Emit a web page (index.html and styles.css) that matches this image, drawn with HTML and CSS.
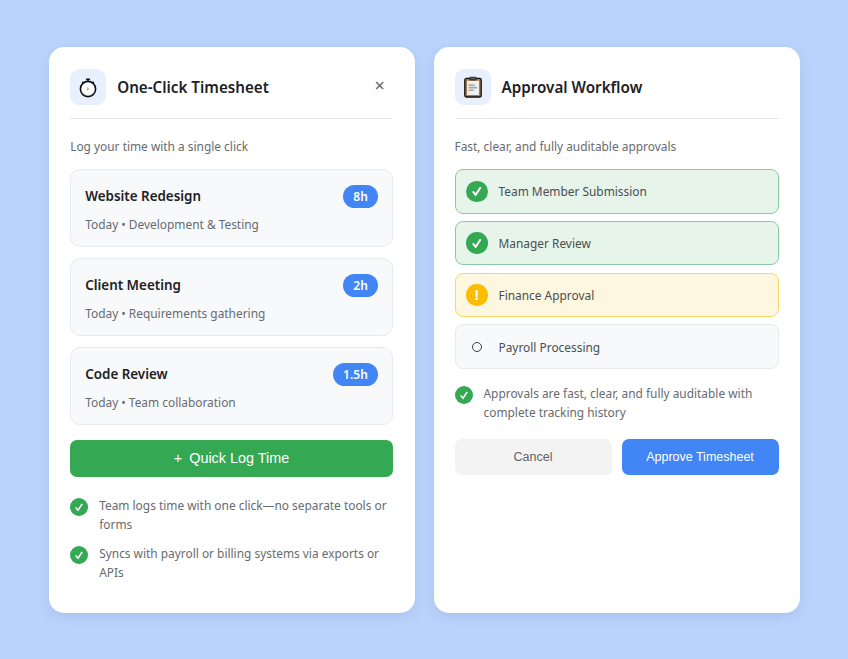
FILE: index.html
```html
<!DOCTYPE html>
<html lang="en">
<head>
  <meta charset="UTF-8">
  <title>Timesheet</title>
  <link rel="stylesheet" href="styles.css">
</head>
<body>
  <div class="card log-card">
    <div class="head">
      <div class="icon-box">
        <svg width="24" height="24" viewBox="0 0 24 24"><path d="M10.6 4.2h2.8M12 4.2v2.4M6.6 7.4l1 1M17.4 7.4l-1 1" fill="none" stroke="#111" stroke-width="1.5" stroke-linecap="round"/><circle cx="12" cy="14" r="7.6" fill="#fff" stroke="#111" stroke-width="1.6"/><path d="M10.8 12.4 12.6 14 11 15.2" fill="none" stroke="#e4606d" stroke-width="1"/></svg>
      </div>
      <h2>One-Click Timesheet</h2>
      <span class="close">×</span>
    </div>
    <p class="sub">Log your time with a single click</p>

    <div class="entry">
      <div class="entry-top"><h3>Website Redesign</h3><span class="hours">8h</span></div>
      <p>Today • Development &amp; Testing</p>
    </div>
    <div class="entry">
      <div class="entry-top"><h3>Client Meeting</h3><span class="hours">2h</span></div>
      <p>Today • Requirements gathering</p>
    </div>
    <div class="entry">
      <div class="entry-top"><h3>Code Review</h3><span class="hours">1.5h</span></div>
      <p>Today • Team collaboration</p>
    </div>

    <button class="quick"><span class="plus">+</span>Quick Log Time</button>

    <div class="note">
      <span class="tick small"><svg width="18" height="18" viewBox="0 0 18 18"><path d="M5.6 9.4 8 12.2 12.2 5.8" fill="none" stroke="#fff" stroke-width="1.5"/></svg></span>
      <p>Team logs time with one click—no separate tools or forms</p>
    </div>
    <div class="note">
      <span class="tick small"><svg width="18" height="18" viewBox="0 0 18 18"><path d="M5.6 9.4 8 12.2 12.2 5.8" fill="none" stroke="#fff" stroke-width="1.5"/></svg></span>
      <p>Syncs with payroll or billing systems via exports or APIs</p>
    </div>
  </div>

  <div class="card">
    <div class="head">
      <div class="icon-box">
        <svg width="24" height="24" viewBox="0 0 24 24"><rect x="3.8" y="3.4" width="16.4" height="18.6" rx="1.6" fill="#a9784c" stroke="#111" stroke-width="1.3"/><rect x="6" y="5.8" width="12" height="14.2" fill="#efefef"/><path d="M7.6 10h6M7.6 12.6h8.6M7.6 15.2h5" stroke="#a4a4a4" stroke-width="1.6"/><rect x="8.6" y="2.2" width="6.8" height="2.8" rx="1" fill="#555" stroke="#111" stroke-width=".7"/></svg>
      </div>
      <h2>Approval Workflow</h2>
    </div>
    <p class="sub">Fast, clear, and fully auditable approvals</p>

    <div class="step done">
      <span class="tick"><svg width="22" height="22" viewBox="0 0 22 22"><path d="M7 11.4 9.9 15 15 7.2" fill="none" stroke="#fff" stroke-width="2"/></svg></span>
      Team Member Submission
    </div>
    <div class="step done">
      <span class="tick"><svg width="22" height="22" viewBox="0 0 22 22"><path d="M7 11.4 9.9 15 15 7.2" fill="none" stroke="#fff" stroke-width="2"/></svg></span>
      Manager Review
    </div>
    <div class="step warn">
      <span class="tick amber">!</span>
      Finance Approval
    </div>
    <div class="step todo">
      <span class="tick empty"><i></i></span>
      Payroll Processing
    </div>

    <div class="note approvals">
      <span class="tick small"><svg width="18" height="18" viewBox="0 0 18 18"><path d="M5.6 9.4 8 12.2 12.2 5.8" fill="none" stroke="#fff" stroke-width="1.5"/></svg></span>
      <p>Approvals are fast, clear, and fully auditable with complete tracking history</p>
    </div>

    <div class="actions">
      <button class="cancel">Cancel</button>
      <button class="approve">Approve Timesheet</button>
    </div>
  </div>
</body>
</html>
```

FILE: styles.css
```css
* {
  box-sizing: border-box;
}
body {
  margin: 0;
  height: 659px;
  overflow: hidden;
  background: #b9d3fd;
  font-family: "Noto Sans", sans-serif;
  display: flex;
  justify-content: center;
  gap: 19px;
  padding-top: 47px;
}
.card {
  width: 366px;
  height: 566px;
  background: #fff;
  border-radius: 15px;
  padding: 22px 21px;
  box-shadow: 0 4px 14px rgba(0,0,0,0.08);
}
.log-card {
  padding: 22px 21.7px;
}
.head {
  display: flex;
  align-items: center;
  height: 50px;
  padding-bottom: 14px;
  border-bottom: 1px solid #e8eaed;
  position: relative;
}
.icon-box {
  width: 36px;
  height: 36px;
  border-radius: 9px;
  background: #e8f0fe;
  display: flex;
  align-items: center;
  justify-content: center;
  margin-right: 11px;
}
.head h2 {
  margin: 0;
  font-size: 15.2px;
  font-weight: 600;
  color: #202124;
}
.close {
  position: absolute;
  right: 8px;
  top: 4px;
  font-size: 18px;
  line-height: 24px;
  color: #5f6368;
}
.sub {
  margin: 18px 0 14px;
  font-size: 11.9px;
  line-height: 18px;
  color: #676b70;
}
.entry {
  height: 78px;
  background: #f8f9fa;
  border: 1px solid #e8eaed;
  border-radius: 10px;
  padding: 14px;
  margin-bottom: 11px;
}
.entry-top {
  display: flex;
  justify-content: space-between;
  align-items: center;
  height: 24px;
}
.entry h3 {
  margin: 0;
  font-size: 13.4px;
  font-weight: 600;
  color: #202124;
}
.hours {
  background: #4285f4;
  color: #fff;
  font-size: 12px;
  font-weight: 600;
  border-radius: 12px;
  height: 23px;
  line-height: 23px;
  padding: 0 10px;
}
.entry p {
  margin: 7px 0 0;
  font-size: 11.9px;
  line-height: 18px;
  color: #676b70;
}
.quick {
  display: block;
  width: 100%;
  height: 37px;
  margin: 15px 0 19px;
  padding-bottom: 3px;
  background: #34a853;
  color: #fff;
  border: none;
  border-radius: 7px;
  font-family: "Liberation Sans", sans-serif;
  font-size: 14.4px;
}
.plus {
  margin-right: 7px;
}
.note {
  display: flex;
  gap: 11px;
  margin-bottom: 10px;
}
.note p {
  margin: 0;
  font-size: 11.9px;
  line-height: 19px;
  color: #676b70;
}
.tick {
  width: 21.5px;
  height: 21.5px;
  border-radius: 50%;
  background: #34a853;
  flex: none;
  display: flex;
  align-items: center;
  justify-content: center;
}
.tick.small {
  width: 18px;
  height: 18px;
  margin-top: 2px;
}
.tick.amber {
  background: #fbbc04;
  color: #fff;
  font-size: 14px;
  font-weight: 700;
}
.tick.empty {
  background: none;
}
.tick.empty i {
  width: 10px;
  height: 10px;
  border: 1.5px solid #3c4043;
  border-radius: 50%;
}
.step {
  display: flex;
  align-items: center;
  gap: 11px;
  height: 44.6px;
  padding: 0 10.5px;
  margin-bottom: 7.2px;
  border: 1.4px solid;
  border-radius: 8px;
  font-size: 11.9px;
  color: #4a4e52;
}
.done {
  background: #e6f4ea;
  border-color: #86cc9b;
}
.warn {
  background: #fef7e0;
  border-color: #fdd66a;
}
.todo {
  background: #f8f9fa;
  border-color: #e8eaed;
}
.approvals {
  margin-top: 15px;
  margin-bottom: 17px;
}
.actions {
  display: flex;
  gap: 10px;
}
.actions button {
  height: 36px;
  padding-bottom: 1px;
  border: none;
  border-radius: 7px;
  font-family: "Liberation Sans", sans-serif;
  font-size: 12.5px;
}
.cancel {
  width: 157px;
  background: #f3f3f3;
  color: #5f6368;
}
.approve {
  flex: 1;
  background: #4285f4;
  color: #fff;
}
```
